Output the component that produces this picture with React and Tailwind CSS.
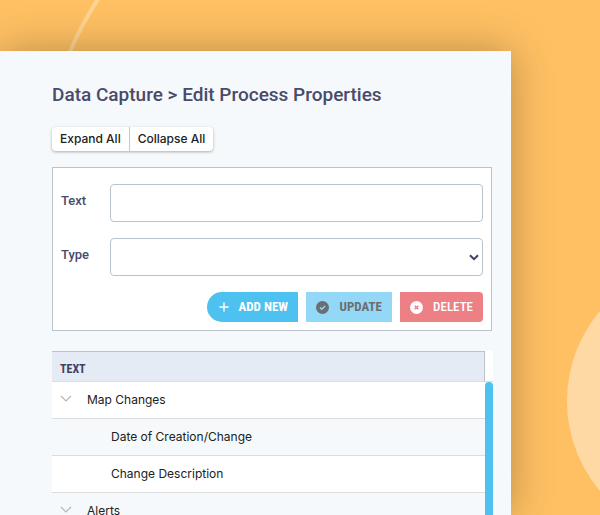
import React from "react";
import { Plus } from "lucide-react";

const rows = [
  { text: "Map Changes", parent: true },
  { text: "Date of Creation/Change" },
  { text: "Change Description" },
  { text: "Alerts", parent: true },
];

const labelClass =
  "w-[49px] pt-2 text-[13px] font-medium leading-[18px] text-[#4a4a6a]";

const fieldClass =
  "h-[38px] min-w-0 flex-1 rounded border border-[#bac3cb] bg-white px-3 text-sm text-[#3f3f5f] focus:outline-none";

function Backdrop() {
  return (
    <div className="absolute inset-0 overflow-hidden">
      <svg
        width="110"
        height="60"
        viewBox="0 0 110 60"
        fill="none"
        className="absolute left-0 top-0"
      >
        <path d="M100 -4 Q82 23 68 56" stroke="#ffd493" strokeWidth="4" />
      </svg>
      <div className="absolute -right-[245px] top-[262px] size-[278px] rounded-full bg-[#ffd9a3]" />
    </div>
  );
}

function CheckBadge() {
  return (
    <svg width="13" height="13" viewBox="0 0 13 13" fill="none">
      <circle cx="6.5" cy="6.5" r="6.5" fill="#6b6d70" />
      <path d="M3.9 6.6l1.8 1.7 3.4-3.4" stroke="#93d8f6" strokeWidth="1.4" />
    </svg>
  );
}

function CloseBadge() {
  return (
    <svg width="13" height="13" viewBox="0 0 13 13" fill="none">
      <circle cx="6.5" cy="6.5" r="6.5" fill="#fff" />
      <path
        d="M4.7 4.7l3.6 3.6M8.3 4.7l-3.6 3.6"
        stroke="#ec8085"
        strokeWidth="1.5"
      />
    </svg>
  );
}

function PropertyForm() {
  return (
    <form
      onSubmit={(e) => e.preventDefault()}
      className="mr-px mt-4 flex flex-col gap-4 border border-[#bac3cb] bg-white px-2 pb-2 pt-4"
    >
      <div className="flex">
        <label htmlFor="prop-text" className={labelClass}>
          Text
        </label>
        <input id="prop-text" type="text" className={fieldClass} />
      </div>
      <div className="flex">
        <label htmlFor="prop-type" className={labelClass}>
          Type
        </label>
        <div className="relative flex min-w-0 flex-1">
          <select
            id="prop-type"
            defaultValue=""
            className={`${fieldClass} appearance-none`}
          >
            <option value=""></option>
          </select>
          <svg
            width="10"
            height="7"
            viewBox="0 0 10 7"
            fill="none"
            className="pointer-events-none absolute right-1 top-4"
          >
            <path d="M1 1.2l4 4 4-4" stroke="#3f3f5f" strokeWidth="2" />
          </svg>
        </div>
      </div>
      <div className="flex justify-end gap-2 font-['Roboto_Condensed','Liberation_Sans_Narrow',Roboto,sans-serif] text-[13px] font-bold">
        <button
          type="submit"
          className="flex h-[30px] w-[91px] items-center justify-between rounded-l-full bg-[#4dc1ef] px-2.5 uppercase text-white"
        >
          <Plus size={14} strokeWidth={2.5} />
          Add New
        </button>
        <button
          type="button"
          className="flex h-[30px] w-[86px] items-center justify-between bg-[#93d8f6] px-2.5 uppercase text-[#6b6d70]"
        >
          <CheckBadge />
          Update
        </button>
        <button
          type="button"
          className="flex h-[30px] w-[83px] items-center justify-between rounded-r bg-[#ec8085] px-2.5 font-medium uppercase text-white"
        >
          <CloseBadge />
          Delete
        </button>
      </div>
    </form>
  );
}

function PropertyTable() {
  return (
    <div className="mt-5 flex min-h-0 flex-1 overflow-hidden">
      <div className="min-w-0 flex-1">
        <table className="w-full border-separate border-spacing-0 text-left font-[Inter,sans-serif] text-xs">
          <thead>
            <tr>
              <th className="h-[31px] border-b border-r border-t border-b-[#dcdddf] border-r-[#bac3cb] border-t-[#bac3cb] bg-[#e4ebf5] px-2 pb-0 pt-1 font-['Roboto_Condensed','Liberation_Sans_Narrow',Roboto,sans-serif] font-bold uppercase text-[#3f3f5f]">
                Text
              </th>
            </tr>
          </thead>
          <tbody className="text-[#212121]">
            {rows.map((row) => (
              <tr key={row.text} className="odd:bg-white even:bg-[#f5f9fc]">
                <td className="h-[37px] border-b border-[#dcdddf] p-0">
                  {row.parent ? (
                    <div className="flex items-center gap-[15px] pl-2">
                      <button
                        type="button"
                        aria-label={`Toggle ${row.text}`}
                        className="pb-1"
                      >
                        <svg width="12" height="7" viewBox="0 0 12 7" fill="none">
                          <path
                            d="M1 1l5 5 5-5"
                            stroke="#b4b7ba"
                            strokeWidth="1.2"
                          />
                        </svg>
                      </button>
                      {row.text}
                    </div>
                  ) : (
                    <div className="pl-[59px]">{row.text}</div>
                  )}
                </td>
              </tr>
            ))}
          </tbody>
        </table>
      </div>
      <div className="flex w-2 flex-col">
        <div className="h-[31px] shrink-0 border-b border-[#dcdddf] bg-white" />
        <div className="flex-1 rounded-t-full bg-[#4dc1ef]" />
      </div>
    </div>
  );
}

export default function App() {
  return (
    <div className="relative flex h-screen flex-col overflow-hidden bg-[#ffc063] pr-[89px] pt-[51px] font-[Roboto,sans-serif]">
      <Backdrop />
      <main className="relative flex min-h-0 flex-1 flex-col bg-[#f5f9fc] pl-[52px] pr-[18px] pt-8 shadow-[0_0_40px_rgba(0,0,0,0.28)]">
        <h1 className="text-[19px] font-medium leading-6 text-[#4a4a6a]">
          Data Capture &gt; Edit Process Properties
        </h1>
        <div className="mt-5 flex self-start rounded bg-white font-[Inter,sans-serif] text-xs font-medium text-[#212121] shadow-[0_1px_3px_rgba(0,0,0,0.3)]">
          <button type="button" className="h-6 border-r border-[#c5c7ca] px-2">
            Expand All
          </button>
          <button type="button" className="h-6 px-2">
            Collapse All
          </button>
        </div>
        <PropertyForm />
        <PropertyTable />
      </main>
    </div>
  );
}
